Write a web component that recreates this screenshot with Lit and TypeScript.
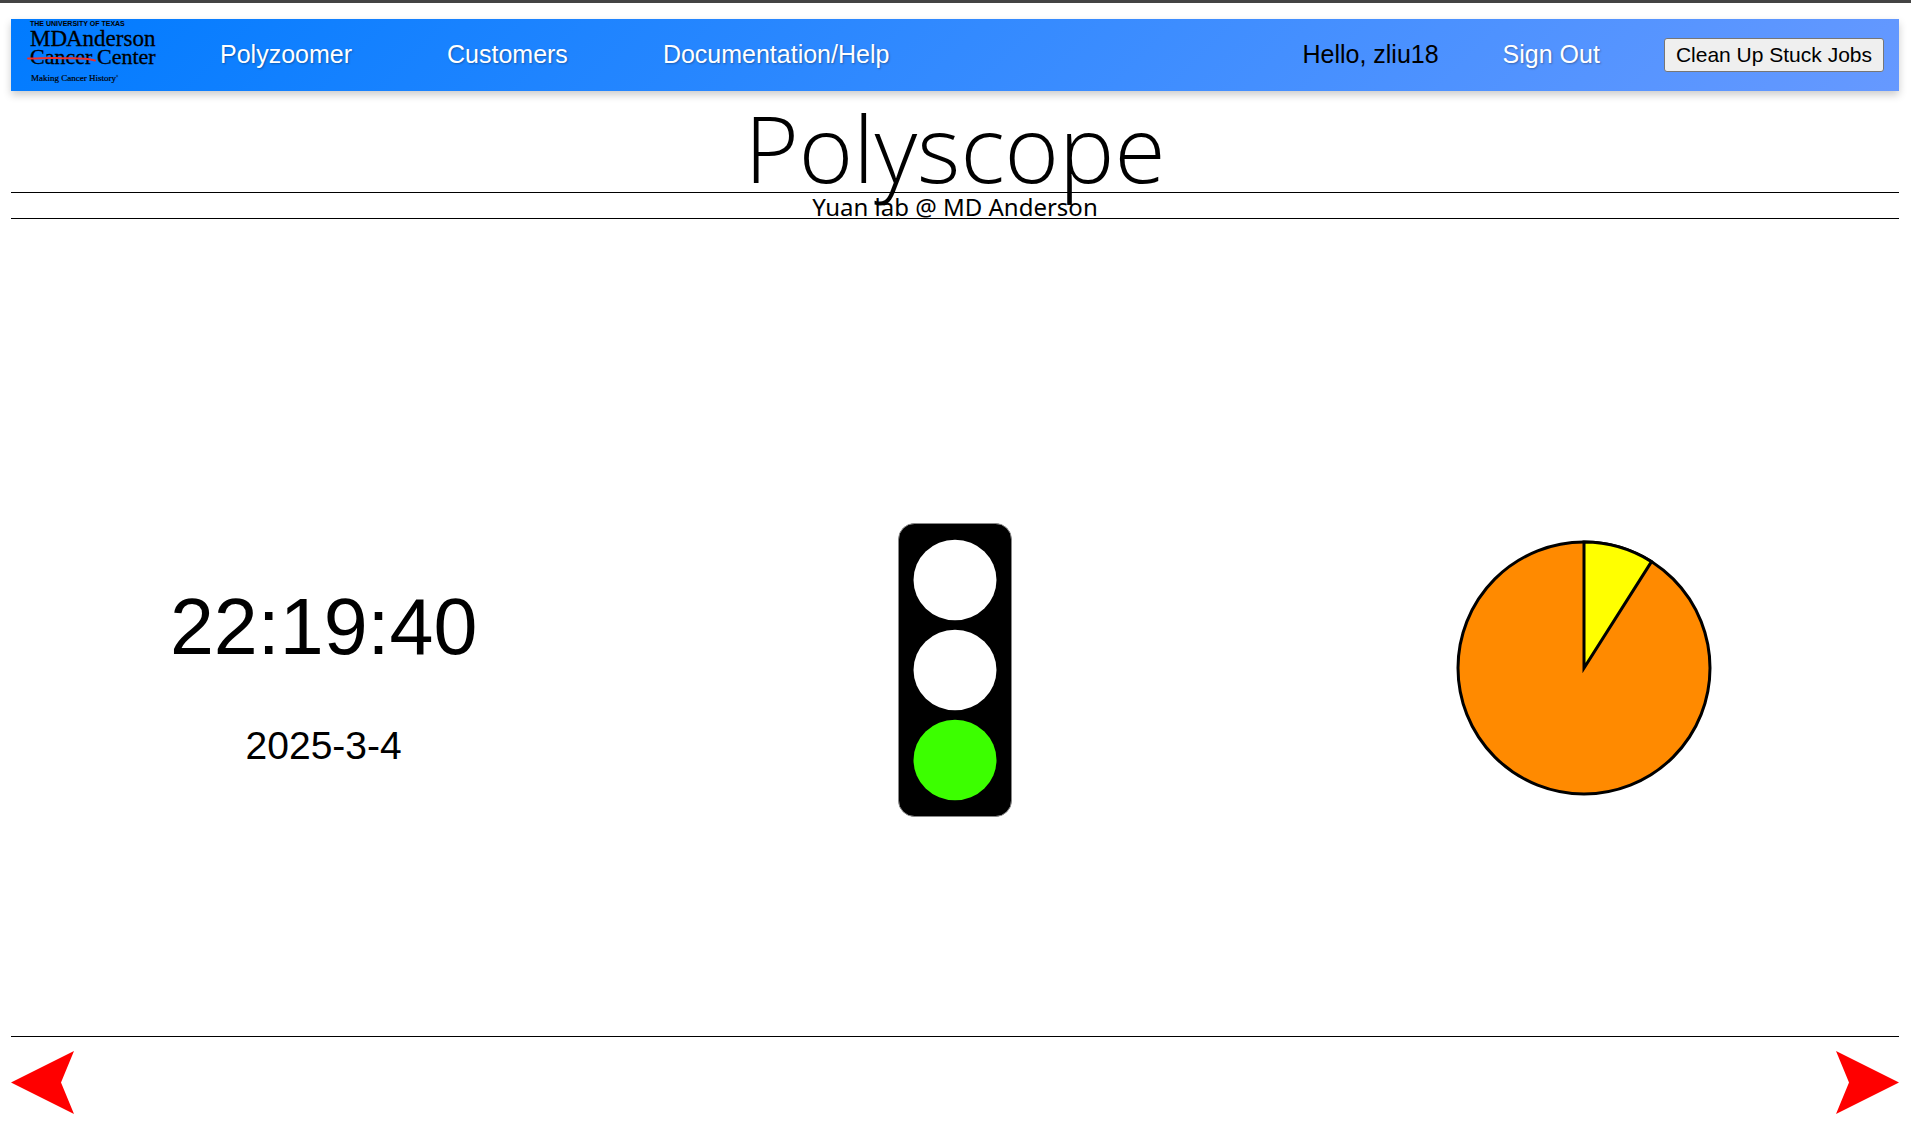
import { LitElement, html, svg, css } from "lit";
import { customElement, property } from "lit/decorators.js";

@customElement("brand-logo")
class BrandLogo extends LitElement {
  static styles = css`
    :host { display: block; }
    .logo { display: block; width: 128px; height: 72px; overflow: visible; }
    .sans { font: 700 7px "Liberation Sans", Arial, sans-serif; }
    .serif { font-family: "Liberation Serif", "Times New Roman", serif; }
    .name { font-size: 23px; stroke: #000; stroke-width: 0.3; }
    .place { font-size: 22px; stroke: #000; stroke-width: 0.3; }
    .tag { font-size: 9px; stroke: #000; stroke-width: 0.2; }
  `;
  render() {
    return html`<svg class="logo" viewBox="0 0 128 72" role="img" aria-label="MD Anderson Cancer Center">
      <text class="sans" x="2" y="7">THE UNIVERSITY OF TEXAS</text>
      <text class="serif name" x="2" y="27">MD</text>
      <text class="serif name" x="38" y="27">Anderson</text>
      <text class="serif place" x="2" y="45">Cancer</text>
      <text class="serif place" x="69" y="45">Center</text>
      <path d="M0 39.5C10 40 17 38.5 28 39C43 40 55 38 67 41.5" fill="none" stroke="#f0302a" stroke-width="2" stroke-linecap="round" />
      <text class="serif tag" x="3" y="62">Making Cancer History</text>
      <circle cx="89" cy="57" r="0.8" fill="none" stroke="#000" stroke-width="0.4" />
    </svg>`;
  }
}

@customElement("traffic-light")
class TrafficLight extends LitElement {
  @property() active = "green";
  static styles = css`
    :host { display: block; }
    .light { display: block; width: 114px; height: 294px; }
  `;
  render() {
    const lamps = [
      { name: "red", color: "#ff0000" },
      { name: "yellow", color: "#ffff00" },
      { name: "green", color: "#3cff00" },
    ];
    return html`<svg class="light" viewBox="0 0 114 294" role="img" aria-label="Status: ${this.active}">
      <rect x="0.5" y="0.5" width="113" height="293" rx="16" fill="#000" stroke="#888" stroke-width="1" />
      ${lamps.map((l, i) => svg`<ellipse cx="57" cy=${57 + i * 90} rx="41.5" ry="40.3"
        fill=${l.name === this.active ? l.color : "#fff"} />`)}
    </svg>`;
  }
}

@customElement("usage-pie")
class UsagePie extends LitElement {
  @property({ type: Number }) share = 0.09;
  static styles = css`
    :host { display: block; padding-bottom: 4px; }
    .pie { display: block; width: 256px; height: 256px; }
  `;
  render() {
    const a = this.share * 2 * Math.PI;
    const x = 128 + 126 * Math.sin(a);
    const y = 128 - 126 * Math.cos(a);
    return html`<svg class="pie" viewBox="0 0 256 256" role="img" aria-label="Usage chart">
      <g stroke="#000" stroke-width="3">
        <circle cx="128" cy="128" r="126" fill="#ff8a00" />
        <path d="M128 128V2A126 126 0 0 1 ${x} ${y}Z" fill="#ff0" />
      </g>
    </svg>`;
  }
}

@customElement("app-root")
class AppRoot extends LitElement {
  static styles = css`
    :host {
      display: flex;
      flex-direction: column;
      box-sizing: border-box;
      min-height: 100vh;
      padding: 16px 12px 10px 11px;
      border-top: 3px solid #444;
      background: #fff;
      color: #000;
      font-family: "Liberation Sans", Arial, sans-serif;
    }
    .bar {
      display: flex;
      align-items: center;
      justify-content: space-between;
      height: 72px;
      padding: 0 15px 0 17px;
      background: linear-gradient(135deg, #007bff, #6699ff);
      box-shadow: 0 4px 8px rgba(0, 0, 0, 0.2);
      font-size: 25px;
    }
    .group { display: flex; align-items: center; gap: 64px; }
    .links { display: flex; gap: 95px; }
    .item { padding-bottom: 2px; }
    .link { color: #fff; text-decoration: none; text-shadow: 1px 1px 2px rgba(0, 0, 0, 0.3); }
    .clean {
      height: 34px;
      padding: 0 11px;
      border: 1px solid #767676;
      border-radius: 3px;
      background: #efefef;
      color: #000;
      font: 21px "Liberation Sans", Arial, sans-serif;
    }
    .title {
      margin: 0;
      height: 101px;
      border-bottom: 1px solid #000;
      font: 300 93px/112px "Open Sans", sans-serif;
      text-align: center;
    }
    .sub {
      margin: 0;
      height: 25px;
      border-bottom: 1px solid #000;
      font: 24px/28px "Noto Sans", sans-serif;
      text-align: center;
    }
    .panels {
      flex: 1;
      display: grid;
      grid-template-columns: repeat(3, 1fr);
      align-items: center;
      justify-items: center;
      padding-top: 84px;
    }
    .clock { display: grid; justify-items: center; gap: 50px; padding: 11px 4px 0 0; }
    .time { font-size: 79px; line-height: 92px; }
    .date { font-size: 39px; line-height: 46px; }
    .pager { display: flex; justify-content: space-between; padding-top: 14px; border-top: 1px solid #000; }
    .step { display: block; padding: 0; border: 0; background: none; }
    .arrow { display: block; width: 63px; height: 63px; }
  `;
  render() {
    return html`
      <header class="bar">
        <div class="group">
          <brand-logo></brand-logo>
          <nav class="links">
            <a class="item link" href="#polyzoomer">Polyzoomer</a>
            <a class="item link" href="#customers">Customers</a>
            <a class="item link" href="#help">Documentation/Help</a>
          </nav>
        </div>
        <div class="group">
          <span class="item">Hello, zliu18</span>
          <a class="item link" href="#signout">Sign Out</a>
          <button class="clean" type="button">Clean Up Stuck Jobs</button>
        </div>
      </header>
      <h1 class="title">Polyscope</h1>
      <p class="sub">Yuan lab @ MD Anderson</p>
      <main class="panels">
        <div class="clock">
          <time class="time">22:19:40</time>
          <time class="date" datetime="2025-03-04">2025-3-4</time>
        </div>
        <traffic-light active="green"></traffic-light>
        <usage-pie share="0.09"></usage-pie>
      </main>
      <footer class="pager">
        <button class="step" type="button" aria-label="Previous">
          <svg class="arrow" viewBox="0 0 63 63"><path d="M0 31.5L63 0L50 31.5L63 63Z" fill="#f00" /></svg>
        </button>
        <button class="step" type="button" aria-label="Next">
          <svg class="arrow" viewBox="0 0 63 63"><path d="M63 31.5L0 0L13 31.5L0 63Z" fill="#f00" /></svg>
        </button>
      </footer>
    `;
  }
}
